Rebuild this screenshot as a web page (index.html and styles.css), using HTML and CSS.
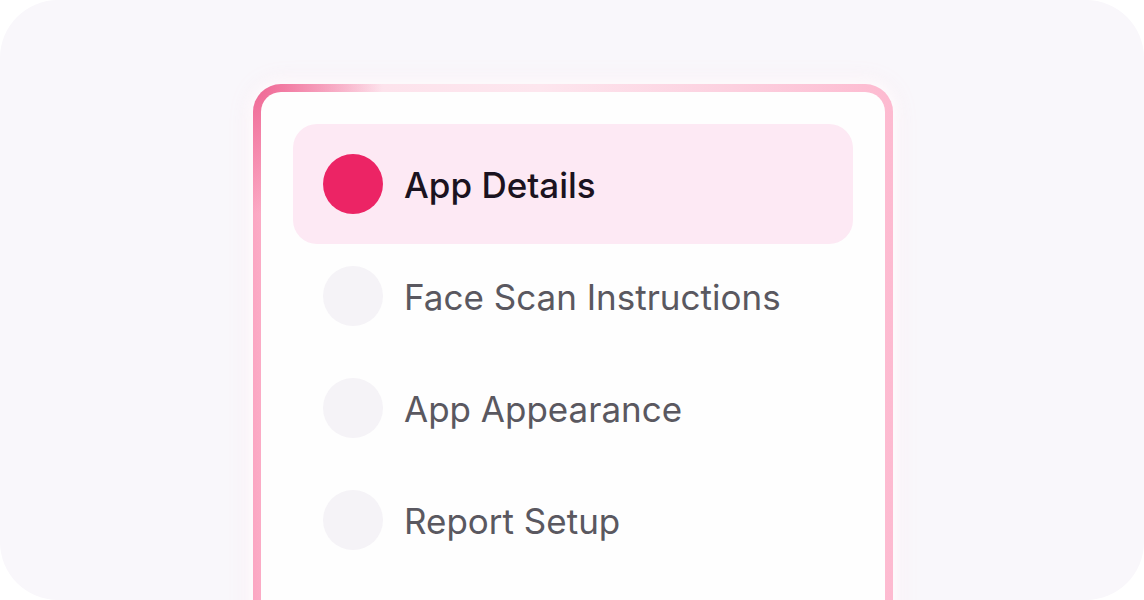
FILE: index.html
```html
<!DOCTYPE html>
<html lang="en">
<head>
<meta charset="utf-8">
<link rel="stylesheet" href="styles.css">
</head>
<body>
<div class="frame">
  <div class="card-border">
    <div class="card">
      <ul class="steps">
        <li class="step active"><span class="dot"></span><span class="label">App Details</span></li>
        <li class="step"><span class="dot"></span><span class="label">Face Scan Instructions</span></li>
        <li class="step"><span class="dot"></span><span class="label">App Appearance</span></li>
        <li class="step"><span class="dot"></span><span class="label">Report Setup</span></li>
      </ul>
    </div>
  </div>
</div>
</body>
</html>
```

FILE: styles.css
```css
html, body {
  margin: 0;
  padding: 0;
  background: #ffffff;
}
body {
  font-family: Inter, "Noto Sans", sans-serif;
}
.frame {
  width: 1144px;
  height: 600px;
  background: #f9f7fb;
  border-radius: 58px;
  overflow: hidden;
  box-sizing: border-box;
  padding-top: 84px;
  padding-left: 253px;
  display: flex;
  align-items: flex-start;
}
.card-border {
  width: 640px;
  flex: none;
  padding: 8px;
  box-sizing: border-box;
  border-radius: 28px;
  background:
    radial-gradient(circle at 0 0, rgba(238, 100, 146, 0.95) 0, rgba(238, 100, 146, 0) 130px),
    linear-gradient(90deg, #fba6c2 0%, #fcc9da 8%, #fde3ec 20%, #fde6ee 45%, #fcd0df 75%, #fdbad0 100%);
  box-shadow: 0 0 14px 4px rgba(255, 255, 255, 0.9), 0 0 24px rgba(250, 160, 190, 0.18);
}
.card {
  background: #fefefe;
  border-radius: 20px;
  padding: 36px 36px;
  height: 560px;
  box-sizing: border-box;
}
.steps {
  list-style: none;
  margin: 0;
  padding: 0;
  display: flex;
  flex-direction: column;
}
.step {
  height: 112px;
  box-sizing: border-box;
  padding: 0 26px;
  display: flex;
  align-items: center;
  gap: 21px;
  border-radius: 20px;
}
.step.active {
  background: #fde9f4;
  box-shadow: 0 0 0 4px #fde9f4;
}
.dot {
  width: 60px;
  height: 60px;
  border-radius: 50%;
  background: #f5f3f7;
  flex: none;
}
.step.active .dot {
  background: #ec2465;
}
.label {
  font-size: 35px;
  color: #5a5860;
  font-weight: 400;
  letter-spacing: 0;
  position: relative;
  top: 1px;
}
.step.active .label {
  color: #1b1320;
  font-weight: 500;
}
```
